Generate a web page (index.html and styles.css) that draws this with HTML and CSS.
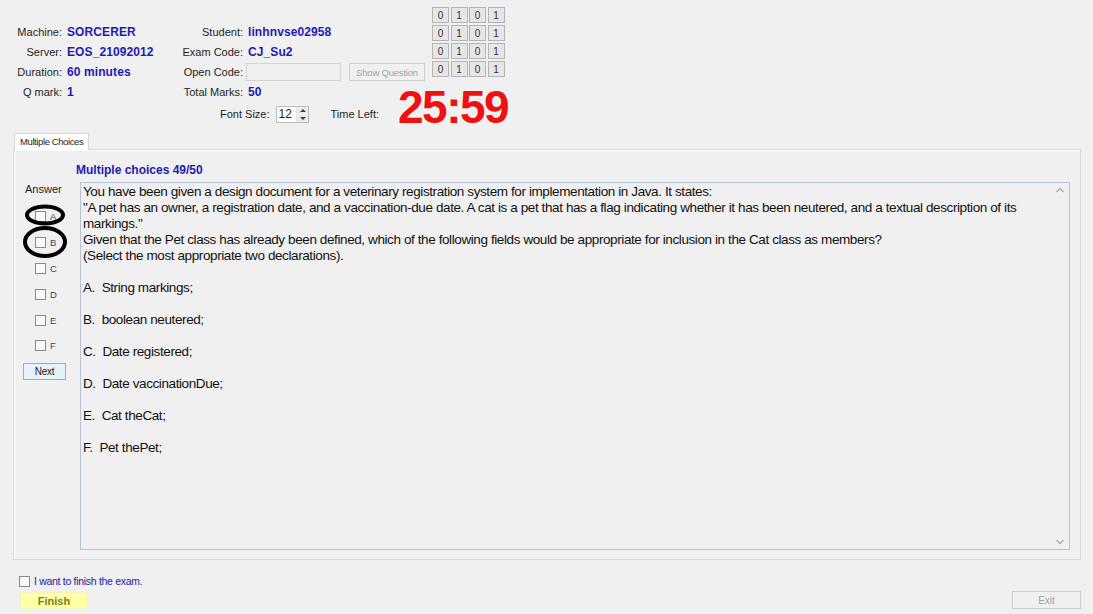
FILE: index.html
```html
<!DOCTYPE html>
<html>
<head>
<meta charset="utf-8">
<link rel="stylesheet" href="styles.css">
</head>
<body>
<div class="app">
  <header class="top">
    <div class="info">
      <div class="info-grid">
        <span class="lbl">Machine:</span><span class="val">SORCERER</span>
        <span class="lbl">Student:</span><span class="val">linhnvse02958</span>
        <span class="lbl">Server:</span><span class="val">EOS_21092012</span>
        <span class="lbl">Exam Code:</span><span class="val">CJ_Su2</span>
        <span class="lbl">Duration:</span><span class="val">60 minutes</span>
        <span class="lbl">Open Code:</span>
        <span class="open-row"><span class="open-input"></span><span class="btn btn-disabled show-q">Show Question</span></span>
        <span class="lbl">Q mark:</span><span class="val">1</span>
        <span class="lbl">Total Marks:</span><span class="val">50</span>
      </div>
      <div class="font-row">
        <span class="lbl-plain">Font Size:</span>
        <span class="spinner"><span class="spin-val">12</span><span class="spin-btns"><span class="spin-up"></span><span class="spin-down"></span></span></span>
        <span class="lbl-plain time-lbl">Time Left:</span>
      </div>
    </div>
    <div class="right">
      <div class="code-grid">
        <span class="cell">0</span><span class="cell">1</span><span class="cell">0</span><span class="cell">1</span>
        <span class="cell">0</span><span class="cell">1</span><span class="cell">0</span><span class="cell">1</span>
        <span class="cell">0</span><span class="cell">1</span><span class="cell">0</span><span class="cell">1</span>
        <span class="cell">0</span><span class="cell">1</span><span class="cell">0</span><span class="cell">1</span>
      </div>
      <div class="timer">25:59</div>
    </div>
  </header>

  <section class="tabs">
    <div class="tab">Multiple Choices</div>
    <div class="panel">
      <div class="panel-title">Multiple choices 49/50</div>
      <div class="panel-body">
        <div class="answers">
          <div class="answer-lbl">Answer</div>
          <label class="opt"><span class="cb"></span><span>A</span></label>
          <label class="opt"><span class="cb"></span><span>B</span></label>
          <label class="opt"><span class="cb"></span><span>C</span></label>
          <label class="opt"><span class="cb"></span><span>D</span></label>
          <label class="opt"><span class="cb"></span><span>E</span></label>
          <label class="opt"><span class="cb"></span><span>F</span></label>
          <span class="btn next-btn">Next</span>
          <svg class="marks" width="50" height="60" viewBox="0 0 50 60">
            <ellipse cx="22" cy="13" rx="18" ry="8.5" fill="none" stroke="#000" stroke-width="4"/>
            <ellipse cx="22" cy="40" rx="20" ry="14" fill="none" stroke="#000" stroke-width="4"/>
          </svg>
        </div>
        <div class="question">
          <div class="q-text">
            <p>You have been given a design document for a veterinary registration system for implementation in Java. It states:<br>"A pet has an owner, a registration date, and a vaccination-due date. A cat is a pet that has a flag indicating whether it has been neutered, and a textual description of its markings."<br>Given that the Pet class has already been defined, which of the following fields would be appropriate for inclusion in the Cat class as members?<br>(Select the most appropriate two declarations).</p>
            <p>A.&nbsp; String markings;</p>
            <p>B.&nbsp; boolean neutered;</p>
            <p>C.&nbsp; Date registered;</p>
            <p>D.&nbsp; Date vaccinationDue;</p>
            <p>E.&nbsp; Cat theCat;</p>
            <p>F.&nbsp; Pet thePet;</p>
          </div>
          <div class="scroll">
            <svg width="10" height="6" viewBox="0 0 10 6"><path d="M1.5 5 L5 1.5 L8.5 5" fill="none" stroke="#a8a8a8" stroke-width="1.3"/></svg>
            <svg width="10" height="6" viewBox="0 0 10 6"><path d="M1.5 1 L5 4.5 L8.5 1" fill="none" stroke="#a8a8a8" stroke-width="1.3"/></svg>
          </div>
        </div>
      </div>
    </div>
  </section>

  <footer class="bottom">
    <div class="finish-col">
      <label class="finish-check"><span class="cb"></span><span class="finish-txt">I want to finish the exam.</span></label>
      <span class="btn finish-btn">Finish</span>
    </div>
    <span class="btn btn-disabled exit-btn">Exit</span>
  </footer>
</div>
</body>
</html>
```

FILE: styles.css
```css
* { box-sizing: border-box; }
html, body {
  margin: 0;
  padding: 0;
  background: #f0f0f0;
  width: 1093px;
  height: 614px;
  overflow: hidden;
  font-family: "Liberation Sans", Arial, sans-serif;
  font-size: 11px;
  color: #1e1e1e;
}
.app { width: 1093px; height: 614px; display: flex; flex-direction: column; }

/* header */
.top { display: flex; height: 131px; }
.info { width: 432px; padding-top: 22px; }
.info-grid {
  display: grid;
  grid-template-columns: 62px 101px 70px auto;
  grid-auto-rows: 20px;
  column-gap: 5px;
  align-items: center;
}
.lbl { text-align: right; white-space: nowrap; }
.val { font-weight: bold; font-size: 12px; color: #1c1cb0; white-space: nowrap; letter-spacing: 0.1px; }
.open-row { display: flex; align-items: center; margin-left: -2px; }
.open-input { width: 95px; height: 18px; border: 1px solid #d4d4d4; background: #f0f0f0; }
.btn {
  display: inline-flex; align-items: center; justify-content: center;
  border: 1px solid #adadad; background: #e1e1e1; color: #1e1e1e;
  font-size: 10px; height: 17px;
}
.btn-disabled { border-color: #cfcfcf; background: #f0f0f0; color: #a3a3a3; }
.show-q { width: 76px; height: 18px; margin-left: 8px; font-size: 9.5px; letter-spacing: -0.2px; }
.font-row { display: flex; align-items: center; height: 20px; margin-top: 2px; padding-left: 220px; }
.lbl-plain { white-space: nowrap; }
.spinner {
  display: flex; width: 33px; height: 17px; margin-left: 6px;
  background: #fff; border: 1px solid #bcbcbc;
}
.spin-val { flex: 1; padding-left: 2px; font-size: 12px; line-height: 15px; }
.spin-btns { width: 12px; display: flex; flex-direction: column; border-left: 1px solid #e6e6e6; }
.spin-up, .spin-down { flex: 1; position: relative; background: #eaeaea; }
.spin-up { border-bottom: 1px solid #fff; }
.spin-up::after, .spin-down::after {
  content: ""; position: absolute; left: 3px; top: 2px;
  border-left: 3px solid transparent; border-right: 3px solid transparent;
}
.spin-up::after { border-bottom: 3px solid #404040; }
.spin-down::after { border-top: 3px solid #404040; }
.time-lbl { margin-left: 22px; }

.right { display: flex; flex-direction: column; padding-top: 7px; }
.code-grid { display: grid; grid-template-columns: repeat(4, 17px); grid-auto-rows: 16px; gap: 2px 1.5px; }
.cell {
  display: flex; align-items: center; justify-content: center;
  border: 1px solid #b4b4b4; background: #e6e6e6; font-size: 10px; color: #333;
}
.timer {
  margin-top: 7px; margin-left: -34px;
  font-size: 46px; font-weight: bold; color: #ee1111; line-height: 46px;
  letter-spacing: -1.5px;
}

/* tabs */
.tabs { display: flex; flex-direction: column; margin-left: 13px; width: 1068px; height: 427px; margin-top: 2px; }
.tab {
  align-self: flex-start; margin-left: 1px; height: 17px; padding: 0 5px;
  border: 1px solid #d6d6d6; border-bottom: none; background: #fff;
  font-size: 9.5px; line-height: 16px; letter-spacing: -0.4px; position: relative; z-index: 1;
  margin-bottom: -1px;
}
.panel {
  flex: 1; border: 1px solid #d6d6d6; background: #f0f0f0;
  box-shadow: inset 1px 1px 0 #fff;
  display: flex; flex-direction: column;
}
.panel-title {
  padding-left: 62px; padding-top: 13px; height: 32px;
  font-weight: bold; font-size: 12px; color: #1c1cb0;
}
.panel-body { display: flex; flex: 1; padding: 0 10px 9px 0; }
.answers { width: 66px; position: relative; display: flex; flex-direction: column; align-items: flex-start; }
.answer-lbl { width: 100%; padding-left: 11px; font-size: 11px; height: 16px; line-height: 14px; margin-bottom: 6px; }
.opt { display: flex; align-items: center; gap: 4px; height: 25.8px; padding-left: 21px; font-size: 9.5px; color: #444; }
.cb { width: 11px; height: 11px; border: 1px solid #8a8a8a; background: #fafafa; display: inline-block; }
.next-btn { margin-top: 4px; margin-left: 9px; width: 43px; height: 17px; border-color: #7eb4ea; background: #e5f1fb; font-size: 10px; letter-spacing: -0.3px; }
.marks { position: absolute; left: 9px; top: 20px; }

.question {
  flex: 1; display: flex; border: 1px solid #b3c5d7; background: #f0f0f0;
}
.q-text { flex: 1; padding: 1px 0 0 2px; font-size: 13.5px; letter-spacing: -0.4px; line-height: 16px; color: #111; }
.q-text p { margin: 0 0 16px 0; }
.scroll { width: 16px; display: flex; flex-direction: column; justify-content: space-between; align-items: center; padding: 4px 0 4px 0; margin-right: 1px; }

/* footer */
.bottom { display: flex; justify-content: space-between; align-items: flex-end; padding: 0 12px 5px 19px; flex: 1; }
.finish-check { display: flex; align-items: center; gap: 4px; height: 14px; }
.finish-txt { color: #2222aa; font-size: 10.5px; letter-spacing: -0.3px; }
.finish-col { display: flex; flex-direction: column; gap: 4px; }
.finish-btn {
  margin-left: 1px; width: 68px; height: 17px; border: 1px solid #f4f4c0; background: #ffffa8;
  color: #80801a; font-weight: bold; font-size: 11px;
}
.exit-btn { width: 69px; height: 18px; }
```
